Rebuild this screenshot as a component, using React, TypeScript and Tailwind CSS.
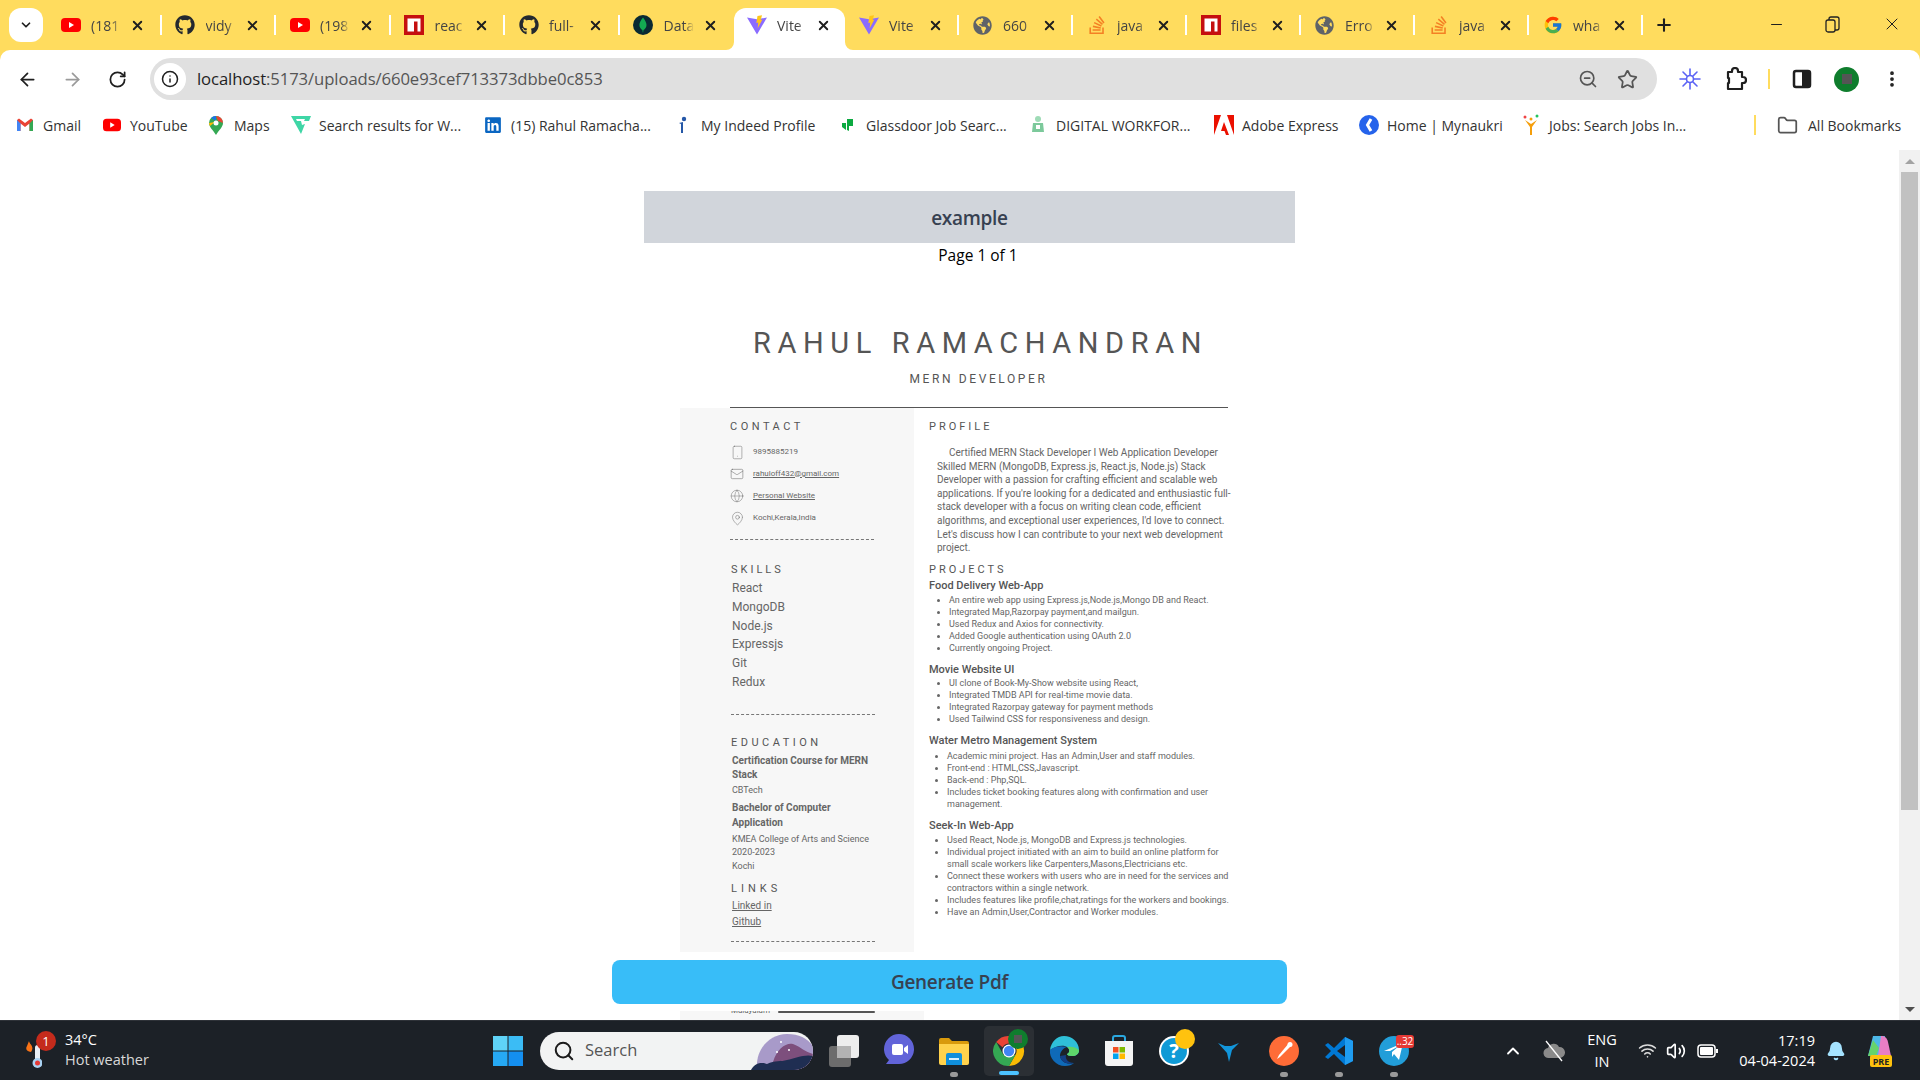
import { ReactNode } from "react";
import {
  ArrowLeft, ArrowRight, RotateCw, Info, ZoomOut, Star, MoreVertical, Folder, Search,
  ChevronUp, ChevronDown, Volume2, Wifi, Bell, Minus, X, Plus, Smartphone, Mail, Globe, MapPin,
} from "lucide-react";
import { FaGithub, FaGlobeAmericas, FaLinkedin } from "react-icons/fa";
import { FcGoogle } from "react-icons/fc";
import { SiStackoverflow } from "react-icons/si";

const YouTube = () => (
  <svg width="20" height="20" viewBox="0 0 20 20">
    <rect x="0" y="3" width="20" height="14" rx="4" fill="#f00" />
    <path d="M8 7l5 3-5 3z" fill="#fff" />
  </svg>
);
const Npm = () => (
  <svg width="20" height="20" viewBox="0 0 20 20">
    <rect width="20" height="20" fill="#c50f0f" />
    <path d="M3.500 3.500h13v13h-3V6.500h-3.500v10h-6.500z" fill="#fff" />
  </svg>
);
const Mongo = () => (
  <svg width="20" height="20" viewBox="0 0 20 20">
    <circle cx="10" cy="10" r="10" fill="#0a2a33" />
    <path d="M10 2.500c2.500 3 3.500 5.500 3.500 7.500 0 2.500-1.500 4-3 5l-.4 2.500h-.3l-.4-2.500c-1.500-1-3-2.500-3-5 0-2 1-4.500 3.600-7.500z" fill="#13aa52" />
  </svg>
);
const Vite = () => (
  <svg width="20" height="20" viewBox="0 0 20 20">
    <path d="M0 2.500l10 1.800 10-1.800-10 17z" fill="#8a6cff" />
    <path d="M10.500 1l4.500-.8-1.300 4.800 1.700-.4-4.800 9 .7-6-2 .5z" fill="#ffc517" />
  </svg>
);
const Globe2 = () => <FaGlobeAmericas size={19} color="#5f6368" />;
const Stack = () => <SiStackoverflow size={18} color="#f48024" />;

const tabs: { id: number; icon: ReactNode; title: string; active?: boolean }[] = [
  { id: 1, icon: <YouTube />, title: "(181" },
  { id: 2, icon: <FaGithub size={20} color="#24292f" />, title: "vidy" },
  { id: 3, icon: <YouTube />, title: "(198" },
  { id: 4, icon: <Npm />, title: "reac" },
  { id: 5, icon: <FaGithub size={20} color="#24292f" />, title: "full-" },
  { id: 6, icon: <Mongo />, title: "Data" },
  { id: 7, icon: <Vite />, title: "Vite", active: true },
  { id: 8, icon: <Vite />, title: "Vite" },
  { id: 9, icon: <Globe2 />, title: "660" },
  { id: 10, icon: <Stack />, title: "java" },
  { id: 11, icon: <Npm />, title: "files" },
  { id: 12, icon: <Globe2 />, title: "Erro" },
  { id: 13, icon: <Stack />, title: "java" },
  { id: 14, icon: <FcGoogle size={20} />, title: "wha" },
];

const Gmail = () => (
  <svg width="16" height="14" viewBox="0 0 16 14">
    <path d="M0 2v11h3.500V5.500L8 9l4.500-3.500V13H16V2l-2-1.500L8 5 2 .5z" fill="#ea4335" />
    <path d="M0 2v11h3.500V5.500z" fill="#4285f4" />
    <path d="M16 2v11h-3.500V5.500z" fill="#34a853" />
  </svg>
);
const Pin = () => (
  <svg width="14" height="19" viewBox="0 0 14 19">
    <path d="M7 0a7 7 0 0 1 7 7c0 4-4 7-7 12C4 14 0 11 0 7a7 7 0 0 1 7-7z" fill="#34a853" />
    <path d="M2 2a7 7 0 0 1 5-2v5z" fill="#1a73e8" />
    <path d="M7 0a7 7 0 0 1 7 7l-5-2z" fill="#ea4335" />
    <path d="M0 7c0 1 .3 2 1 3l5-4z" fill="#fbbc04" />
    <circle cx="7" cy="7" r="2.500" fill="#fff" />
  </svg>
);
const bookmarks: { id: string; icon: ReactNode; label: string; w: string }[] = [
  { id: "gmail", icon: <Gmail />, label: "Gmail", w: "w-[87px]" },
  { id: "yt", icon: <div className="scale-90"><YouTube /></div>, label: "YouTube", w: "w-[104px]" },
  { id: "maps", icon: <Pin />, label: "Maps", w: "w-[85px]" },
  {
    id: "wf",
    icon: <svg width="20" height="18" viewBox="0 0 20 18"><path d="M0 0h20l-2 5H10l1 4 3-1-4 10L5 9z" fill="#3fd6a6" /><path d="M5 3h9l-1 2H6z" fill="#fff" /></svg>,
    label: "Search results for W...", w: "w-[192px]",
  },
  { id: "li", icon: <FaLinkedin size={18} color="#0a66c2" />, label: "(15) Rahul Ramacha...", w: "w-[190px]" },
  {
    id: "indeed",
    icon: <svg width="10" height="18" viewBox="0 0 10 18"><circle cx="6" cy="3" r="2.200" fill="#2557a7" /><path d="M1 7l4-1v11H3V8z" fill="#2557a7" /></svg>,
    label: "My Indeed Profile", w: "w-[165px]",
  },
  {
    id: "gd",
    icon: <svg width="12" height="14" viewBox="0 0 12 14"><path d="M5 1h6v7H7v5l-2-1zM0 5h4v7L0 9z" fill="#0caa41" /></svg>,
    label: "Glassdoor Job Searc...", w: "w-[190px]",
  },
  {
    id: "dw",
    icon: <svg width="14" height="20" viewBox="0 0 14 20"><circle cx="7" cy="4" r="3" fill="#9edbb6" /><path d="M2 8h10l1 9H1z" fill="#7cc99b" /><rect x="5" y="10" width="4" height="4" fill="#fff" /></svg>,
    label: "DIGITAL WORKFOR...", w: "w-[186px]",
  },
  {
    id: "ad",
    icon: <svg width="20" height="20" viewBox="0 0 20 20"><path d="M7 0H0v20zM13 0h7v20zM10 7l5 13h-3l-1.500-4H7z" fill="#eb1000" /></svg>,
    label: "Adobe Express", w: "w-[145px]",
  },
  {
    id: "my",
    icon: <svg width="20" height="20" viewBox="0 0 20 20"><circle cx="10" cy="10" r="10" fill="#2563eb" /><path d="M12 4L8.500 10l3.500 6" stroke="#fff" strokeWidth="3" fill="none" /></svg>,
    label: "Home | Mynaukri", w: "w-[162px]",
  },
  {
    id: "jobs",
    icon: <svg width="18" height="22" viewBox="0 0 18 22"><circle cx="3" cy="3" r="1.500" fill="#ef4444" /><circle cx="9" cy="5" r="1.500" fill="#f59e0b" /><circle cx="15" cy="2" r="1.500" fill="#22c55e" /><path d="M3 6l5 7v8h2v-8l5-7-6 4z" fill="#f59e0b" /></svg>,
    label: "Jobs: Search Jobs In...", w: "w-[234px]",
  },
];

const contact: { id: string; icon: ReactNode; text: string; link?: boolean }[] = [
  { id: "phone", icon: <Smartphone size={15} strokeWidth={0.7} />, text: "9895885219" },
  { id: "mail", icon: <Mail size={14} strokeWidth={0.8} />, text: "rahuloff432@gmail.com", link: true },
  { id: "web", icon: <Globe size={14} strokeWidth={0.7} />, text: "Personal Website", link: true },
  { id: "loc", icon: <MapPin size={15} strokeWidth={0.7} />, text: "Kochi,Kerala,India" },
];

const skills = ["React", "MongoDB", "Node.js", "Expressjs", "Git", "Redux"];

const profile = [
  "Certified MERN Stack Developer I Web Application Developer",
  "Skilled MERN (MongoDB, Express.js, React.js, Node.js) Stack",
  "Developer with a passion for crafting efficient and scalable web",
  "applications. If you're looking for a dedicated and enthusiastic full-",
  "stack developer with a focus on writing clean code, efficient",
  "algorithms, and exceptional user experiences, I'd love to connect.",
  "Let's discuss how I can contribute to your next web development",
  "project.",
];

const SectionTitle = ({ children, spacing }: { children: string; spacing: string }) => (
  <div className={`h-[16px] leading-[16px] text-[11px] text-[#555] whitespace-nowrap ${spacing}`}>{children}</div>
);
const Dashed = ({ className }: { className: string }) => (
  <div className={`w-[144px] h-px border-t border-dashed border-[#777] ${className}`} />
);

function BulletList({ items, pad, className }: { items: string[]; pad: string; className: string }) {
  return (
    <ul className={`list-disc text-[9px] leading-[12px] text-[#666] ${pad} ${className}`}>
      {items.map((item) => <li key={item}>{item}</li>)}
    </ul>
  );
}

function Resume() {
  return (
    <div className="w-[620px] ml-[680px]" style={{ fontFamily: "Roboto, sans-serif" }}>
      <div className="mt-[58px] h-[36px] leading-[36px] text-[29px] tracking-[6.600px] text-[#555] text-center pl-[4px] whitespace-nowrap w-[597px]">RAHUL RAMACHANDRAN</div>
      <div className="mt-[9px] h-[18px] leading-[18px] text-[12px] tracking-[2.600px] text-[#555] text-center w-[597px]">MERN DEVELOPER</div>
      <div className="mt-[19px] ml-[50px] w-[498px] h-px bg-[#555]" />
      <div className="flex h-[544px]">
        <div className="w-[234px] bg-[#f7f7f7] pl-[50px] pt-[11px]">
          <SectionTitle spacing="tracking-[3.500px]">CONTACT</SectionTitle>
          <div className="mt-[6px]">
            {contact.map((c) => (
              <div key={c.id} className="h-[22px] flex items-center text-[#666]">
                <div className="w-[23px] flex items-center text-[#555]">{c.icon}</div>
                <span className={`text-[8px] ${c.link ? "underline" : ""}`}>{c.text}</span>
              </div>
            ))}
          </div>
          <Dashed className="mt-[10px]" />
          <SectionTitle spacing="mt-[22px] tracking-[3px] ml-px">SKILLS</SectionTitle>
          <div className="ml-[2px] mt-px">
            {skills.map((s) => <div key={s} className="h-[18.750px] leading-[18.750px] text-[12px] text-[#666]">{s}</div>)}
          </div>
          <Dashed className="mt-[22px] ml-px" />
          <SectionTitle spacing="mt-[20px] tracking-[3.500px] ml-px">EDUCATION</SectionTitle>
          <div className="ml-[2px]">
            <div className="mt-[3px] text-[10px] leading-[14px] font-bold text-[#666]">Certification Course for MERN<br />Stack</div>
            <div className="mt-px text-[9px] leading-[14px] text-[#666]">CBTech</div>
            <div className="mt-[3px] text-[10px] leading-[15px] font-bold text-[#666]">Bachelor of Computer<br />Application</div>
            <div className="mt-[3px] text-[9px] leading-[13.500px] text-[#666]">KMEA College of Arts and Science<br />2020-2023<br />Kochi</div>
          </div>
          <SectionTitle spacing="mt-[8px] tracking-[4px] ml-px">LINKS</SectionTitle>
          <div className="ml-[2px] text-[10px] leading-[16px] text-[#666] underline">
            <div className="mt-px">Linked in</div>
            <div>Github</div>
          </div>
          <Dashed className="mt-[11px] ml-px" />
        </div>
        <div className="pl-[15px] pt-[11px] w-[320px]">
          <SectionTitle spacing="tracking-[3px]">PROFILE</SectionTitle>
          <div className="mt-[11px] ml-[8px] text-[10px] leading-[13.600px] text-[#666] whitespace-nowrap">
            {profile.map((line, i) => <div key={line} className={i === 0 ? "pl-[12px]" : ""}>{line}</div>)}
          </div>
          <SectionTitle spacing="mt-[7px] tracking-[3px]">PROJECTS</SectionTitle>
          <div className="mt-px text-[11px] leading-[14px] font-medium text-[#555]">Food Delivery Web-App</div>
          <BulletList
            pad="pl-[20px]" className="mt-px"
            items={[
              "An entire web app using Express.js,Node.js,Mongo DB and React.",
              "Integrated Map,Razorpay payment,and mailgun.",
              "Used Redux and Axios for connectivity.",
              "Added Google authentication using OAuth 2.0",
              "Currently ongoing Project.",
            ]}
          />
          <div className="mt-[9px] text-[11px] leading-[14px] font-medium text-[#555]">Movie Website UI</div>
          <BulletList
            pad="pl-[20px]" className="mt-0"
            items={[
              "UI clone of Book-My-Show website using React,",
              "Integrated TMDB API  for real-time movie data.",
              "Integrated Razorpay gateway for payment methods",
              "Used Tailwind CSS for responsiveness and design.",
            ]}
          />
          <div className="mt-[9px] text-[11px] leading-[14px] font-medium text-[#555]">Water Metro Management System</div>
          <BulletList
            pad="pl-[18px]" className="mt-[2px] w-[290px]"
            items={[
              "Academic mini project. Has an Admin,User and staff modules.",
              "Front-end : HTML,CSS,Javascript.",
              "Back-end : Php,SQL.",
              "Includes ticket booking features along with confirmation and user management.",
            ]}
          />
          <div className="mt-[9px] text-[11px] leading-[14px] font-medium text-[#555]">Seek-In Web-App</div>
          <BulletList
            pad="pl-[18px]" className="mt-px w-[310px]"
            items={[
              "Used React, Node.js, MongoDB and Express.js technologies.",
              "Individual project initiated with an aim to build an online platform for small scale workers like Carpenters,Masons,Electricians etc.",
              "Connect these workers with users who are in need for the services and contractors within a single network.",
              "Includes features like profile,chat,ratings for the workers and bookings.",
              "Have an Admin,User,Contractor and Worker modules.",
            ]}
          />
        </div>
      </div>
      <div className="mt-[59px] w-[244px] h-[10px] bg-[#f7f7f7] pl-[51px] flex items-start overflow-hidden">
        <span className="text-[8px] leading-[12px] -mt-[6px] w-[47px] text-[#666]">Malayalam</span>
        <div className="w-[97px] h-[2px] rounded-full bg-[#555]" />
      </div>
    </div>
  );
}

const Chrome = () => (
  <svg width="32" height="32" viewBox="0 0 32 32">
    <path d="M16 1a15 15 0 0 1 13 7.500H16a7.500 7.500 0 0 0-6.500 3.800L3.200 7A15 15 0 0 1 16 1z" fill="#ea4335" />
    <path d="M29 8.500A15 15 0 0 1 16 31l6.500-11.300A7.500 7.500 0 0 0 22.500 12z" fill="#fbbc04" />
    <path d="M16 31A15 15 0 0 1 3.200 7l6.300 11.200a7.500 7.500 0 0 0 6.500 3.800l6.500-2.300z" fill="#34a853" />
    <circle cx="16" cy="16" r="6.500" fill="#fff" />
    <circle cx="16" cy="16" r="5.200" fill="#4285f4" />
  </svg>
);
const Edge = () => (
  <svg width="30" height="30" viewBox="0 0 30 30">
    <path d="M1 14C2 6 8 0 15 0c8 0 15 6 15 14 0 4-3 6-7 6-3 0-5-1-5-2 3-1 3-5 0-7-5-3-12 0-17 3z" fill="#2fc0d8" />
    <path d="M30 14c0 4-3 6-7 6-3 0-5-1-5-2 3-1 3-5 0-7 4-1 9 0 12 3z" fill="#5ed66a" />
    <path d="M1 14c-1 8 6 16 15 16 4 0 7-1 9-3-7 2-13-1-14-7 0-4 3-8 7-9-7-2-14 0-17 3z" fill="#0f6ab8" />
    <path d="M11 20c1 6 7 9 14 7-6 0-9-4-8-8z" fill="#123f86" />
  </svg>
);
const Store = () => (
  <svg width="30" height="32" viewBox="0 0 30 32">
    <path d="M9 7V3a2 2 0 0 1 2-2h8a2 2 0 0 1 2 2v4" stroke="#2aa8e0" strokeWidth="2" fill="none" />
    <path d="M1 6h28v22a3 3 0 0 1-3 3H4a3 3 0 0 1-3-3z" fill="#f4f4f4" />
    <rect x="9" y="12" width="5.500" height="5.500" fill="#f25022" />
    <rect x="15.500" y="12" width="5.500" height="5.500" fill="#7fba00" />
    <rect x="9" y="18.500" width="5.500" height="5.500" fill="#00a4ef" />
    <rect x="15.500" y="18.500" width="5.500" height="5.500" fill="#ffb900" />
  </svg>
);
const Postman = () => (
  <svg width="30" height="30" viewBox="0 0 30 30">
    <circle cx="15" cy="15" r="15" fill="#ff6c37" />
    <path d="M20 7l3 2-3 3-9 9-3 2 2-4z" fill="#fff" />
    <circle cx="21" cy="8.500" r="2.500" fill="#fff" />
  </svg>
);
const VsCode = () => (
  <svg width="30" height="30" viewBox="0 0 30 30">
    <path d="M21 1l8 4v20l-8 4-11-11-6 5-3-2 6-6-6-6 3-2 6 5z" fill="#0078d4" />
    <path d="M21 1l8 4v20l-8 4z" fill="#1f9cf0" />
    <path d="M21 9l-8 6 8 6z" fill="#1c2127" />
  </svg>
);
const Telegram = () => (
  <svg width="30" height="30" viewBox="0 0 30 30">
    <circle cx="15" cy="15" r="15" fill="#229ed9" />
    <path d="M5 15l19-8-4 17-5-6-2 3v-5l7-6-9 5z" fill="#fff" />
  </svg>
);

type Task = { id: string; w: string; icon: ReactNode; dot?: boolean; badge?: ReactNode };

const taskIcons: Task[] = [
  {
    id: "view", w: "w-[54px]",
    icon: <svg width="30" height="32" viewBox="0 0 30 32"><rect x="0" y="11" width="22" height="21" rx="3" fill="#6c6c6c" /><rect x="8" y="0" width="22" height="23" rx="3" fill="#ededed" /><rect x="8" y="11" width="14" height="12" fill="#b3b3b3" /></svg>,
  },
  {
    id: "meet", w: "w-[55px]",
    icon: <svg width="30" height="34" viewBox="0 0 30 34"><path d="M15 0a15 15 0 0 1 15 15v1a15 15 0 0 1-15 14H2l3-4A15 15 0 0 1 0 16v-1A15 15 0 0 1 15 0z" fill="#6264d9" /><rect x="8" y="10" width="11" height="11" rx="2" fill="#fff" /><path d="M20 14l4-3v9l-4-3z" fill="#fff" /></svg>,
  },
  {
    id: "files", w: "w-[56px]", dot: true,
    icon: <svg width="30" height="28" viewBox="0 0 30 28"><path d="M0 3a2 2 0 0 1 2-2h8l3 3h15a2 2 0 0 1 2 2v4H0z" fill="#d99a0c" /><path d="M0 7h30v19a2 2 0 0 1-2 2H2a2 2 0 0 1-2-2z" fill="#ffd24c" /><path d="M7 18a2 2 0 0 1 2-2h12a2 2 0 0 1 2 2v10H7z" fill="#0f8fdc" /><rect x="10" y="21" width="10" height="2" fill="#d5f0ff" /></svg>,
  },
];

const taskIcons2: Task[] = [
  { id: "edge", w: "w-[56px]", icon: <Edge /> },
  { id: "store", w: "w-[54px]", icon: <Store /> },
  {
    id: "help", w: "w-[55px]",
    icon: <svg width="30" height="30" viewBox="0 0 30 30"><circle cx="15" cy="15" r="15" fill="#fff" /><circle cx="15" cy="15" r="13" fill="#0f9ad6" /><text x="15" y="22" textAnchor="middle" fontSize="20" fontWeight="700" fill="#fff" fontFamily="Open Sans">?</text></svg>,
    badge: <div className="absolute top-[8px] left-[29px] w-[20px] h-[20px] rounded-full bg-[#ffc20e]" />,
  },
  {
    id: "bird", w: "w-[55px]",
    icon: <svg width="22" height="22" viewBox="0 0 22 22"><path d="M0 3l7 3 6 0 8-3-7 7-3 12-2-9z" fill="#1296db" /></svg>,
  },
  { id: "postman", w: "w-[55px]", icon: <Postman />, dot: true },
  { id: "vscode", w: "w-[55px]", icon: <VsCode />, dot: true },
  {
    id: "tg", w: "w-[55px]", icon: <Telegram />, dot: true,
    badge: <div className="absolute top-[14px] left-[30px] w-[18px] h-[13px] rounded-[3px] bg-[#e53935] text-white text-[10px] leading-[13px] text-center">..32</div>,
  },
];

function TaskIcon({ t }: { t: Task }) {
  return (
    <div className={`relative h-full flex items-center justify-center shrink-0 ${t.w}`}>
      {t.icon}
      {t.badge}
      {t.dot && <div className="absolute bottom-[3px] left-1/2 -translate-x-1/2 w-[8px] h-[5px] rounded-full bg-[#9a9a9a]" />}
    </div>
  );
}

export default function App() {
  return (
    <div className="w-[1920px] h-[1080px] flex flex-col overflow-hidden bg-[#ffdc5e] text-[#1f1f1f]" style={{ fontFamily: "'Open Sans', sans-serif" }}>
      {/* Tab strip */}
      <div className="h-[50px] flex items-end shrink-0">
        <div className="w-[47px] h-[42px] pl-[9px] pb-[8px] flex items-start">
          <div className="w-[34px] h-[34px] rounded-[12px] bg-white flex items-center justify-center">
            <ChevronDown size={14} strokeWidth={3} />
          </div>
        </div>
        {tabs.map((t) => (
          <div
            key={t.id}
            className={`relative h-[42px] flex items-center pb-[8px] shrink-0 rounded-t-[12px] ${t.active ? "w-[111px] pl-[12px] bg-white" : t.id < 7 ? "w-[114.500px] pl-[13px]" : "w-[114px] pl-[13px]"}`}
          >
            {t.active && (
              <>
                <svg width="8" height="8" viewBox="0 0 8 8" className="absolute -left-[8px] bottom-0"><path d="M8 0v8H0a8 8 0 0 0 8-8z" fill="#fff" /></svg>
                <svg width="8" height="8" viewBox="0 0 8 8" className="absolute -right-[8px] bottom-0"><path d="M0 0v8h8a8 8 0 0 1-8-8z" fill="#fff" /></svg>
              </>
            )}
            <div className="w-[21px] h-[21px] flex items-center justify-center mr-[10px] shrink-0">{t.icon}</div>
            <span className="w-[30px] text-[14px] whitespace-nowrap text-[#444] [mask-image:linear-gradient(to_right,black_70%,transparent)]">{t.title}</span>
            <X size={15} strokeWidth={3} className="ml-[9px] shrink-0" />
            {!t.active && t.id !== 6 && <div className="absolute top-[7px] right-0 w-[2px] h-[20px] bg-white" />}
          </div>
        ))}
        <div className="h-[42px] flex items-center pl-[11px] pb-[8px]"><Plus size={20} strokeWidth={2.500} /></div>
        <div className="h-[50px] flex-1 flex items-center pb-[2px] pl-[94px]">
          <Minus size={17} strokeWidth={1.500} className="mr-[40px]" />
          <svg width="15" height="17" viewBox="0 0 15 17" className="mr-[42px]" fill="none" stroke="#222" strokeWidth="1.300"><rect x="1" y="4" width="9" height="12" rx="2" /><path d="M4 4V3a2 2 0 0 1 2-2h6a2 2 0 0 1 2 2v9a2 2 0 0 1-2 2h-2" /></svg>
          <X size={20} strokeWidth={1.200} />
        </div>
      </div>

      {/* Toolbar */}
      <div className="h-[50px] bg-white rounded-t-[10px] flex items-center shrink-0 pt-[8px]">
        <div className="w-[150px] flex items-center pl-[17px] shrink-0">
          <ArrowLeft size={21} strokeWidth={2} className="mr-[24px]" />
          <ArrowRight size={21} strokeWidth={2} className="mr-[25px] text-[#9a9a9a]" />
          <RotateCw size={19} strokeWidth={2.200} />
        </div>
        <div className="w-[1507px] h-[42px] rounded-full bg-[#e0e0e0] flex items-center pl-[4px] shrink-0">
          <div className="w-[32px] h-[32px] rounded-full bg-white flex items-center justify-center"><Info size={18} strokeWidth={2} /></div>
          <div className="ml-[11px] text-[16.700px] tracking-[-0.100px] text-[#555] whitespace-nowrap">
            <span className="text-[#1f1f1f]">localhost</span>:5173/uploads/660e93cef713373dbbe0c853
          </div>
          <div className="flex-1" />
          <ZoomOut size={20} strokeWidth={2} className="text-[#555] mr-[19px]" />
          <Star size={21} strokeWidth={2} className="text-[#555] mr-[19px]" />
        </div>
        <div className="flex-1 flex items-center pl-[22px] text-[#1f1f1f]">
          <svg width="22" height="22" viewBox="0 0 22 22" className="mr-[24px]" stroke="#5b63f5" strokeWidth="1.600" strokeLinecap="round"><path d="M11 1v20M1 11h20M4 4l14 14M18 4L4 18" /><circle cx="11" cy="11" r="3.500" fill="#fff" /></svg>
          <svg width="22" height="24" viewBox="0 0 22 24" className="mr-[21px]" fill="none" stroke="#1f1f1f" strokeWidth="2.200" strokeLinejoin="round">
            <path d="M3 5h4V4a3 3 0 0 1 6 0v1h4v5h1a3 3 0 0 1 0 6h-1v6H3v-6h1v-5H3z" />
          </svg>
          <div className="w-[2px] h-[20px] bg-[#ffdc5e] mr-[22px]" />
          <svg width="20" height="20" viewBox="0 0 20 20" className="mr-[22px]" fill="none"><rect x="2" y="2" width="16" height="16" rx="2" stroke="#1f1f1f" strokeWidth="2.500" /><rect x="10" y="2" width="8" height="16" fill="#1f1f1f" /></svg>
          <div className="w-[25px] h-[25px] rounded-full bg-[#0f7d2d] flex items-center justify-center mr-[23px]"><div className="w-[10px] h-[10px] bg-[#555]" /></div>
          <MoreVertical size={20} strokeWidth={2.500} />
        </div>
      </div>

      {/* Bookmarks */}
      <div className="h-[50px] bg-white flex items-center pl-[15px] text-[14px] text-[#333] shrink-0">
        {bookmarks.map((b) => (
          <div key={b.id} className={`flex items-center shrink-0 whitespace-nowrap ${b.w}`}>
            <div className="w-[20px] h-[22px] flex items-center justify-center mr-[-1px] shrink-0">{b.icon}</div>
            <span className="ml-[9px]">{b.label}</span>
          </div>
        ))}
        <div className="w-[2px] h-[20px] bg-[#ffdc5e] ml-[-1px] mr-[21px] shrink-0" />
        <Folder size={21} strokeWidth={2} className="text-[#555] mr-[10px] shrink-0" />
        <span className="whitespace-nowrap">All Bookmarks</span>
      </div>

      {/* Page */}
      <div className="flex-1 flex bg-white min-h-0">
        <div className="relative flex-1 overflow-hidden">
          <div className="mt-[41px] ml-[644px] w-[651px] h-[52px] bg-[#d1d5db] flex items-center justify-center pt-[2px] text-[19px] tracking-[-0.300px] font-semibold text-[#374151]">example</div>
          <div className="ml-[644px] w-[668px] h-[24px] leading-[24px] text-center text-[15.500px] text-black">Page 1 of 1</div>
          <Resume />
          <div className="absolute left-[612px] top-[810px] w-[675px] h-[44px] rounded-[8px] bg-[#38bdf8] flex items-center justify-center pt-[1px] text-[19px] tracking-[-0.300px] font-semibold text-[#374151]">Generate Pdf</div>
        </div>
        <div className="w-[21px] bg-[#f1f1f1] flex flex-col items-center shrink-0">
          <div className="h-[22px] flex items-center justify-center"><div className="w-0 h-0 border-x-[5px] border-x-transparent border-b-[5px] border-b-[#a3a3a3]" /></div>
          <div className="w-[17px] h-[638px] bg-[#c1c1c1]" />
          <div className="flex-1" />
          <div className="h-[22px] flex items-center justify-center"><div className="w-0 h-0 border-x-[5px] border-x-transparent border-t-[5px] border-t-[#505050]" /></div>
        </div>
      </div>

      {/* Taskbar */}
      <div className="h-[60px] bg-[#1c2127] border-t border-[#2e3238] flex items-center text-white shrink-0">
        <div className="w-[493px] h-full flex items-center pl-[26px] shrink-0">
          <div className="relative w-[39px] h-[40px] shrink-0">
            <svg width="16" height="28" viewBox="0 0 16 28" className="absolute left-0 top-[10px]">
              <path d="M4 0c0 3 6 5 2 11-4 0-6-3-4-6z" fill="#f97316" transform="translate(-1 0)" />
              <rect x="9" y="4" width="5" height="17" rx="2.500" fill="#e8eef5" />
              <circle cx="11.500" cy="22" r="5" fill="#a9d2f3" />
              <circle cx="11.500" cy="22" r="2.500" fill="#e53935" />
            </svg>
            <div className="absolute left-[10px] top-0 w-[20px] h-[20px] rounded-full bg-[#c42b1c] text-[13px] leading-[20px] text-center">1</div>
          </div>
          <div className="text-[14.500px] leading-[20px] whitespace-nowrap -mt-[1px]">
            <div>34°C</div>
            <div className="text-[#d8d8d8]">Hot weather</div>
          </div>
        </div>
        <svg width="30" height="30" viewBox="0 0 30 30" className="shrink-0">
          <rect width="14.500" height="14.500" fill="#5fd3f7" /><rect x="15.500" width="14.500" height="14.500" fill="#3bbcf5" />
          <rect y="15.500" width="14.500" height="14.500" fill="#26a9f4" /><rect x="15.500" y="15.500" width="14.500" height="14.500" fill="#148ff0" />
        </svg>
        <div className="ml-[17px] w-[273px] h-[38px] rounded-full bg-[#f2f3f3] flex items-center pl-[13px] overflow-hidden shrink-0 relative">
          <Search size={22} strokeWidth={2.200} className="text-[#1c1c1c]" />
          <span className="ml-[10px] text-[16.500px] text-[#555]">Search</span>
          <svg width="66" height="38" viewBox="0 0 66 38" className="absolute right-0 top-0">
            <path d="M10 38C8 18 22 2 40 2c12 0 20 4 26 12v24z" fill="#a89ac9" />
            <path d="M26 30c4-14 14-20 20-18 8 3 12 8 20 10v16H30z" fill="#7d4f7d" />
            <path d="M4 38c4-8 12-8 16-6 8-4 14-2 20-4 8-2 18-6 26-4v14z" fill="#1f2e52" />
            <circle cx="34" cy="10" r="1" fill="#fff" /><circle cx="42" cy="18" r="1" fill="#fff" /><circle cx="30" cy="20" r="1" fill="#fff" />
          </svg>
        </div>
        <div className="h-full ml-[4px] flex items-center">
          {taskIcons.map((t) => <TaskIcon key={t.id} t={t} />)}
          <div className="relative h-[50px] w-[50px] shrink-0 flex items-center justify-center rounded-[5px] bg-[#2b2f34] mx-[2px]">
            <Chrome />
            <div className="absolute left-[24px] top-[3px] w-[20px] h-[20px] rounded-full bg-[#0f7d2d] flex items-center justify-center"><div className="w-[8px] h-[8px] bg-[#555]" /></div>
            <div className="absolute bottom-[1px] left-[15px] w-[20px] h-[4px] rounded-full bg-[#4cc2ff]" />
          </div>
          {taskIcons2.map((t) => <TaskIcon key={t.id} t={t} />)}
        </div>
        <div className="ml-[82px] flex items-center shrink-0">
          <ChevronUp size={20} strokeWidth={2.200} className="mr-[20px]" />
          <svg width="22" height="22" viewBox="0 0 22 22" className="mr-[17px]">
            <path d="M6 18a5 5 0 0 1-1-10 6 6 0 0 1 11-1 5.500 5.500 0 0 1 1 11z" fill="#8a8a8a" />
            <path d="M3 1l16 20" stroke="#fff" strokeWidth="1.300" />
          </svg>
          <div className="w-[40px] text-[14.500px] leading-[22px] text-center">ENG<br />IN</div>
          <Wifi size={19} strokeWidth={2} className="ml-[16px] text-[#ddd]" />
          <Volume2 size={20} strokeWidth={2} className="ml-[9px]" />
          <svg width="22" height="14" viewBox="0 0 22 14" className="ml-[11px]" fill="none"><rect x="1" y="1" width="17" height="12" rx="3" stroke="#fff" strokeWidth="1.500" /><rect x="3" y="3" width="13" height="8" rx="1" fill="#fff" /><rect x="19" y="5" width="2" height="4" fill="#fff" /></svg>
          <div className="w-[96px] text-right text-[14.500px] leading-[20px]">17:19<br />04-04-2024</div>
          <Bell size={20} fill="#a5e3ff" color="#a5e3ff" className="ml-[11px]" />
          <svg width="30" height="34" viewBox="0 0 30 34" className="ml-[18px]">
            <path d="M9 2h12l-4 20H4z" fill="#4db8e8" />
            <path d="M17 2c4 0 6 2 7 6l3 14H14z" fill="#e87ec5" />
            <path d="M4 22L9 6l6 8-3 8z" fill="#67d46b" />
            <rect x="6" y="21" width="22" height="12" rx="2" fill="#ffc20e" />
            <text x="17" y="31" textAnchor="middle" fontSize="9" fontWeight="700" fill="#222" fontFamily="Open Sans">PRE</text>
          </svg>
        </div>
      </div>
    </div>
  );
}
